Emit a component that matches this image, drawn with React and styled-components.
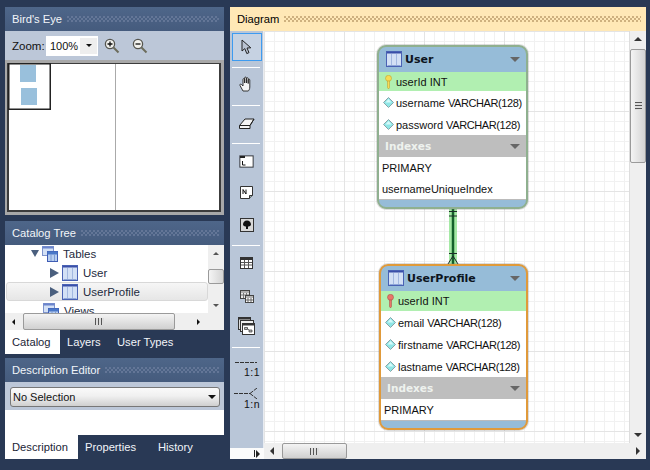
import React from 'react';
import styled, { createGlobalStyle } from 'styled-components';

const GlobalStyle = createGlobalStyle`
  html, body { margin: 0; padding: 0; background: #293955; overflow: hidden; }
  * { box-sizing: border-box; }
  body { font-family: "Liberation Sans", Arial, sans-serif; font-size: 11px; white-space: nowrap; }
`;

const TableIcon = () => (
  <svg width="16" height="16" viewBox="0 0 16 16">
    <rect x="0.5" y="0.5" width="15" height="15" fill="#d3e0f5" stroke="#4a62b4" />
    <rect x="1" y="1" width="14" height="1.500" fill="#3a4fa8" />
    <path d="M5.500 3v11M10.500 3v11" stroke="#a3b8e0" />
    <path d="M1.500 14.500h13" stroke="#8ea6d8" />
  </svg>
);

const TablesIcon = () => (
  <svg width="16" height="16" viewBox="0 0 16 16">
    <rect x="0.5" y="0.5" width="11" height="9" fill="#d3e0f5" stroke="#7d93cc" />
    <rect x="0.5" y="0.5" width="11" height="2" fill="#6b84cc" />
    <rect x="5.500" y="5.500" width="10" height="10" fill="#b8cff0" stroke="#3f5cb4" />
    <rect x="5.500" y="5.500" width="10" height="3" fill="#4a78c8" />
    <path d="M9 8v7M12.500 8v7" stroke="#7f9cd4" />
  </svg>
);

const KeyIcon = ({ color, dark }) => (
  <svg width="7" height="14" viewBox="0 0 7 14">
    <ellipse cx="3.500" cy="3.300" rx="3" ry="3" fill={color} stroke={dark} strokeWidth="0.5" />
    <path d="M2.500 6h2v6.500l-1 1.500-1-1.500z" fill={color} stroke={dark} strokeWidth="0.5" />
  </svg>
);

const DiamondIcon = () => (
  <svg width="11" height="11" viewBox="0 0 11 11">
    <path d="M5.500 0.500l5 5-5 5-5-5z" fill="#8fe6e6" stroke="#8aa4a8" />
    <path d="M5.500 2l3 3.500h-6z" fill="#d6fafa" />
  </svg>
);

const MagnifierIcon = ({ plus }) => (
  <svg width="16" height="16" viewBox="0 0 16 16">
    <circle cx="6" cy="6" r="4.600" fill="#f2f2ee" stroke="#55554f" strokeWidth="1.300" />
    <path d="M9.500 9.500l5 5" stroke="#6c6c5c" strokeWidth="2" />
    <path d={plus ? 'M3.500 6h5M6 3.500v5' : 'M3.500 6h5'} stroke="#111" strokeWidth="1.300" />
  </svg>
);

const CursorIcon = () => (
  <svg width="12" height="16" viewBox="0 0 12 16">
    <path d="M1 1l0 11 2.800-2.400 2 5 2.200-1-2-4.600 3.800-.2z" fill="#b9c3d2" stroke="#222" strokeWidth="1" />
  </svg>
);

const HandIcon = () => (
  <svg width="16" height="16" viewBox="0 0 16 16">
    <path d="M4 15l-3-5.500c-.6-1.200.7-1.800 1.500-1L4 10V3.500c0-1.200 1.500-1.200 1.600 0V7V2c0-1.200 1.700-1.200 1.800 0v5V2.600c0-1.200 1.700-1.200 1.800 0V7.500V4c0-1.200 1.600-1.200 1.600 0v7c0 2-1 4-1.800 4z" fill="#f4f4f4" stroke="#222" strokeWidth="0.900" />
  </svg>
);

const EraserIcon = () => (
  <svg width="16" height="11" viewBox="0 0 16 11">
    <path d="M0.500 7.500L6 1h9l-4 6.500v3H0.500z" fill="#f4f4f4" stroke="#222" />
    <path d="M0.500 7.500h10.500M11 7.500L15 1" stroke="#222" fill="none" />
  </svg>
);

const LayerIcon = () => (
  <svg width="15" height="13" viewBox="0 0 15 13">
    <rect x="0" y="0" width="15" height="13" fill="#8e97a6" />
    <rect x="1" y="1" width="13" height="11" fill="#fff" stroke="#111" strokeWidth="0.600" />
    <path d="M1 1h5v2H1z" fill="#222" />
    <path d="M3.500 6v4h3" stroke="#111" fill="none" />
  </svg>
);

const NoteIcon = () => (
  <svg width="13" height="13" viewBox="0 0 13 13">
    <path d="M0.500 0.500h12v9l-3 3h-9z" fill="#fff" stroke="#333" />
    <path d="M3 8V3.500l3 4.500V3.500" stroke="#111" fill="none" />
    <path d="M9.500 12.500v-3h3" fill="#9aa" stroke="#333" />
  </svg>
);

const ImageIcon = () => (
  <svg width="14" height="14" viewBox="0 0 14 14">
    <rect x="0.500" y="0.500" width="13" height="13" fill="#d8d8d8" stroke="#333" />
    <path d="M7 2.500c2.500 0 4 2 4 4 0 1.500-2 2-3 2v2.500H6V8.500c-1 0-3-.5-3-2 0-2 1.500-4 4-4z" fill="#111" />
  </svg>
);

const GridIcon = () => (
  <svg width="13" height="12" viewBox="0 0 13 12">
    <rect x="0.500" y="0.500" width="12" height="11" fill="#fff" stroke="#333" />
    <path d="M0.500 2h12" stroke="#333" strokeWidth="2" />
    <path d="M1 5.500h11M1 8h11M4.500 3v8M8.500 3v8" stroke="#555" />
  </svg>
);

const ViewIcon = () => (
  <svg width="14" height="13" viewBox="0 0 14 13">
    <rect x="0.500" y="0.500" width="9" height="8" fill="#e8e8e8" stroke="#444" />
    <path d="M1 2h8M3.500 3v5M6.500 3v5M1 5h8" stroke="#777" />
    <rect x="5.500" y="5.500" width="8" height="7" fill="#fff" stroke="#444" />
    <path d="M6 7h7M8 8v4M11 8v4M6 10h7" stroke="#666" />
  </svg>
);

const RoutineIcon = () => (
  <svg width="17" height="18" viewBox="0 0 17 18">
    <rect x="0.500" y="0.500" width="12" height="12" fill="#ddd" stroke="#333" />
    <rect x="0.500" y="0.500" width="12" height="2" fill="#333" />
    <rect x="2.500" y="3.500" width="13" height="11" fill="#eee" stroke="#333" />
    <rect x="4.500" y="6.500" width="12" height="11" fill="#fff" stroke="#333" />
    <rect x="4.500" y="6.500" width="12" height="2" fill="#333" />
    <path d="M6.500 10.500h3v2h-3zM11 13h3v2h-3zM9.500 11.500L11 13" fill="#bbb" stroke="#333" strokeWidth="0.700" />
  </svg>
);

const Connector = () => (
  <Link width="20" height="58" viewBox="0 0 20 58">
    <rect x="7" y="0" width="8" height="56" fill="#8fe48f" opacity="0.8" />
    <path d="M11 0v56" stroke="#14602a" strokeWidth="2.500" />
    <path d="M7 3.500h8M7 8h8M7 45.500h8" stroke="#1c2a28" strokeWidth="1" />
    <path d="M11 48L6 56M11 48L16 56" stroke="#1c2a28" strokeWidth="1" fill="none" />
  </Link>
);

const Page = styled.div`
  width: 650px;
  height: 470px;
  display: flex;
  gap: 6px;
  padding: 7px 4px 11px 5px;
  background: #293955;
  overflow: hidden;
`;

const LeftColumn = styled.div`
  width: 219px;
  display: flex;
  flex-direction: column;
`;

const PaneHeader = styled.div`
  height: 24px;
  flex: none;
  display: flex;
  align-items: center;
  gap: 5px;
  padding: 0 5px 0 7px;
  font-size: 11.200px;
  color: ${({ $light }) => ($light ? '#000' : '#f2f5f9')};
  background: ${({ $light }) => ($light ? '#ffe8b6' : 'linear-gradient(#4e6689, #455b7d)')};
`;

const Dots = styled.div`
  flex: 1;
  height: 6px;
  background-image:
    radial-gradient(circle at 1px 1px, ${({ $light }) => ($light ? '#cdb07e' : '#647798')} 0.700px, transparent 1px),
    radial-gradient(circle at 3px 3px, ${({ $light }) => ($light ? '#cdb07e' : '#647798')} 0.700px, transparent 1px);
  background-size: 4px 4px;
`;

const ZoomBar = styled.div`
  height: 29px;
  flex: none;
  display: flex;
  align-items: center;
  padding: 0 0 0 7px;
  background: #bcc7d8;
`;

const ZoomLabel = styled.span`
  width: 34px;
  font-size: 11.500px;
  color: #111;
`;

const ZoomSelect = styled.div`
  width: 52px;
  height: 20px;
  display: flex;
  align-items: center;
  justify-content: space-between;
  padding-left: 4px;
  background: #fff;
  color: #111;
`;

const ZoomArrow = styled.div`
  width: 17px;
  height: 16px;
  margin-right: 1px;
  display: flex;
  align-items: center;
  justify-content: center;
  background: #eee;
`;

const ZoomButton = styled.div`
  display: flex;
  margin-left: ${({ $left }) => $left}px;
`;

const Caret = styled.div`
  width: 0;
  height: 0;
  flex: none;
  border-style: solid;
  border-color: transparent;
  border-width: ${({ $size = 4 }) => $size}px;
  ${({ $dir = 'down', $color = '#111', $size = 4, $long }) => {
    if ($dir === 'down') return `border-top-color: ${$color}; border-bottom-width: 0; border-top-width: ${$long || $size}px;`;
    if ($dir === 'up') return `border-bottom-color: ${$color}; border-top-width: 0;`;
    if ($dir === 'left') return `border-right-color: ${$color}; border-left-width: 0;`;
    return `border-left-color: ${$color}; border-right-width: 0; border-left-width: ${$long || $size}px;`;
  }}
`;

const BirdWell = styled.div`
  height: 155px;
  flex: none;
  padding: 3px 3px 3px 2px;
  background: #a8a8a8;
`;

const BirdCanvas = styled.div`
  position: relative;
  height: 149px;
  background: #fff;
  border: 2px solid #3c3c3c;
  border-top-width: 1px;
`;

const BirdDivider = styled.div`
  position: absolute;
  left: 106px;
  top: 0;
  bottom: 0;
  width: 1px;
  background: #aaa;
`;

const BirdViewport = styled.div`
  position: absolute;
  left: -1px;
  top: -1px;
  width: 43px;
  height: 47px;
  border: 1px solid #222;
  box-shadow: inset 0 0 0 0.500px #222;
`;

const BirdTable = styled.div`
  position: absolute;
  left: ${({ $x }) => $x}px;
  top: ${({ $y }) => $y}px;
  width: 16px;
  height: 17px;
  background: #99c0dc;
`;

const PaneGap = styled.div`
  height: ${({ $size }) => $size}px;
  flex: none;
`;

const TreeArea = styled.div`
  height: 68px;
  flex: none;
  display: flex;
  background: #fff;
`;

const TreeList = styled.div`
  flex: 1;
  overflow: hidden;
  padding-left: 1px;
`;

const TreeRows = styled.div`
  margin-top: -1px;
`;

const TreeRow = styled.div`
  height: 19px;
  display: flex;
  align-items: center;
  padding-left: ${({ $indent }) => $indent}px;
  font-size: 11.500px;
  color: #1d2a3d;
  border-radius: 3px;
  border: 1px solid ${({ $selected }) => ($selected ? '#d8d8d8' : 'transparent')};
  background: ${({ $selected }) => ($selected ? 'linear-gradient(#f6f6f6, #e6e6e6)' : 'transparent')};
`;

const RowIcon = styled.span`
  display: flex;
  margin: 0 5px 0 3px;
`;

const Scroll = styled.div`
  flex: none;
  display: flex;
  align-items: stretch;
  flex-direction: ${({ $vertical }) => ($vertical ? 'column' : 'row')};
  ${({ $vertical, $thick = 16 }) => ($vertical ? `width: ${$thick}px;` : `height: ${$thick}px;`)}
  background: #efefef;
`;

const ScrollArrow = styled.div`
  flex: none;
  display: flex;
  align-items: center;
  justify-content: center;
  width: 16px;
  height: 16px;
  align-self: center;
`;

const ScrollSpace = styled.div`
  flex: ${({ $size }) => ($size === undefined ? '1' : `0 0 ${$size}px`)};
`;

const ScrollThumb = styled.div`
  flex: 0 0 ${({ $size }) => $size}px;
  display: flex;
  align-items: center;
  justify-content: center;
  border: 1px solid #9a9a9a;
  border-radius: 2px;
  background: ${({ $vertical }) =>
    $vertical ? 'linear-gradient(90deg, #f4f4f4, #d4d4d4)' : 'linear-gradient(#f4f4f4, #d0d0d0)'};
`;

const Grip = styled.div`
  width: ${({ $vertical }) => ($vertical ? '7px' : '9px')};
  height: ${({ $vertical }) => ($vertical ? '8px' : '7px')};
  background: ${({ $vertical }) =>
    $vertical
      ? 'repeating-linear-gradient(#555 0 1px, #ddd 1px 3px)'
      : 'repeating-linear-gradient(90deg, #555 0 1px, #ddd 1px 3px)'};
`;

const TabBar = styled.div`
  height: 24px;
  flex: none;
  display: flex;
`;

const Tab = styled.div`
  width: ${({ $width }) => $width}px;
  display: flex;
  align-items: center;
  padding: 0 0 1px 7px;
  font-size: 11.200px;
  color: ${({ $active }) => ($active ? '#1b2536' : '#f2f5f9')};
  background: ${({ $active }) => ($active ? '#fff' : 'transparent')};
`;

const SelectBar = styled.div`
  height: 28px;
  flex: none;
  padding: 5px 4px 4px 5px;
  background: #bcc7d8;
`;

const SelectBox = styled.div`
  height: 20px;
  display: flex;
  align-items: center;
  justify-content: space-between;
  padding: 0 3px 0 2px;
  color: #111;
  border: 1px solid #777;
  border-radius: 3px;
  background: linear-gradient(#fafafa 0%, #f0f0f0 45%, #cfcfcf 100%);
`;

const DescriptionBody = styled.div`
  height: 25px;
  flex: none;
  background: #fff;
`;

const RightColumn = styled.div`
  flex: 1;
  display: flex;
  flex-direction: column;
`;

const DiagramBody = styled.div`
  flex: 1;
  display: flex;
  min-height: 0;
`;

const Palette = styled.div`
  width: 34px;
  flex: none;
  display: flex;
  flex-direction: column;
  align-items: center;
  padding: 2px 1px 0 0;
  background: #b9c6d8;
  border-right: 1px solid #e8ecf2;
`;

const Tool = styled.div`
  width: 30px;
  height: 28px;
  flex: none;
  margin-top: ${({ $top = 0 }) => $top}px;
  margin-left: 1px;
  display: flex;
  align-items: center;
  justify-content: center;
  border: 1px solid ${({ $selected }) => ($selected ? '#3d9bf0' : 'transparent')};
  background: ${({ $selected }) => ($selected ? '#c6d2e2' : 'transparent')};
`;

const ToolSeparator = styled.div`
  width: 28px;
  height: 1px;
  flex: none;
  margin-top: ${({ $top }) => $top}px;
  background: #fff;
`;

const RelationTool = styled.div`
  width: 28px;
  flex: none;
  margin-top: ${({ $top }) => $top}px;
  display: flex;
  flex-direction: column;
  align-items: flex-end;
  gap: ${({ $gap }) => $gap}px;
  font-size: 10.500px;
  letter-spacing: 0.500px;
  line-height: 10px;
  color: #111;
`;

const RelationLine = styled.svg`
  margin-right: ${({ $right }) => $right}px;
`;

const PaletteFooter = styled.div`
  margin: auto -1px 0 0;
  width: 34px;
  height: 11px;
  flex: none;
  display: flex;
  align-items: center;
  justify-content: flex-end;
  gap: 1px;
  padding-right: 4px;
  background: #fbfbfb;
`;

const FooterBar = styled.div`
  width: 1px;
  height: 7px;
  background: #222;
`;

const CanvasColumn = styled.div`
  flex: 1;
  min-width: 0;
  display: flex;
  flex-direction: column;
`;

const CanvasRow = styled.div`
  flex: 1;
  min-height: 0;
  display: flex;
`;

const Canvas = styled.div`
  position: relative;
  flex: 1;
  overflow: hidden;
  background-color: #fff;
  background-image:
    linear-gradient(90deg, #e4e4e4 1px, transparent 1px),
    linear-gradient(#e4e4e4 1px, transparent 1px),
    linear-gradient(90deg, #f1f1f1 1px, transparent 1px),
    linear-gradient(#f1f1f1 1px, transparent 1px);
  background-size: 80px 80px, 80px 80px, 10px 10px, 10px 10px;
  border-right: 1px solid #ddd;
`;

const Link = styled.svg`
  position: absolute;
  left: 178px;
  top: 177px;
`;

const EntityCard = styled.div`
  position: absolute;
  left: ${({ $x }) => $x}px;
  top: ${({ $y }) => $y}px;
  width: ${({ $w }) => $w}px;
  display: flex;
  flex-direction: column;
  padding-bottom: 7px;
  border: 2px solid ${({ $border }) => $border};
  border-radius: 9px;
  background: #96bcd8;
  box-shadow: 0 0 0 1px rgba(120, 120, 120, 0.250);
  overflow: hidden;
`;

const EntityTitle = styled.div`
  height: 25px;
  flex: none;
  display: flex;
  align-items: center;
  padding: 0 6px 1px 7px;
  gap: 3px;
  font-family: "DejaVu Sans", sans-serif;
  font-size: 11px;
  font-weight: 700;
  color: #0c1420;
`;

const TitleText = styled.span`
  flex: 1;
`;

const ColumnRow = styled.div`
  height: ${({ $h = 22 }) => $h}px;
  flex: none;
  display: flex;
  align-items: center;
  gap: 2px;
  padding: ${({ $primary }) => ($primary ? '0' : '1px')} 0 0 4px;
  color: #111;
  background: ${({ $primary }) => ($primary ? '#b1efb1' : '#fff')};
`;

const ColumnIcon = styled.span`
  width: 11px;
  flex: none;
  display: flex;
  justify-content: center;
`;

const ColumnType = styled.span`
  margin-left: 3px;
  letter-spacing: -0.400px;
`;

const IndexHeader = styled.div`
  height: 22px;
  flex: none;
  display: flex;
  align-items: center;
  justify-content: space-between;
  padding: 0 6px;
  font-family: "DejaVu Sans", sans-serif;
  font-size: 10.500px;
  font-weight: 700;
  color: #eef2ee;
  background: #bebebe;
`;

const IndexList = styled.div`
  display: flex;
  flex-direction: column;
  background: #fff;
  border-bottom: 1px solid #bbb;
`;

const IndexRow = styled.div`
  height: 21px;
  display: flex;
  align-items: center;
  padding: 1px 0 0 3px;
  color: #111;
`;

const columnsUser = [
  ['username', 'VARCHAR(128)'],
  ['password', 'VARCHAR(128)'],
];

const columnsProfile = [
  ['email', 'VARCHAR(128)'],
  ['firstname', 'VARCHAR(128)'],
  ['lastname', 'VARCHAR(128)'],
];

const Entity = ({ name, x, y, w, border, keyColor, keyDark, columns, indexes, primaryHeight }) => (
  <EntityCard $x={x} $y={y} $w={w} $border={border}>
    <EntityTitle>
      <TableIcon />
      <TitleText>{name}</TitleText>
      <Caret $size={5} $color="#666" />
    </EntityTitle>
    <ColumnRow $primary $h={primaryHeight}>
      <ColumnIcon><KeyIcon color={keyColor} dark={keyDark} /></ColumnIcon>
      userId INT
    </ColumnRow>
    {columns.map(([col, type]) => (
      <ColumnRow key={col}>
        <ColumnIcon><DiamondIcon /></ColumnIcon>
        <span>{col}<ColumnType>{type}</ColumnType></span>
      </ColumnRow>
    ))}
    <IndexHeader>
      Indexes
      <Caret $size={5} $color="#666" />
    </IndexHeader>
    <IndexList>
      {indexes.map((ix) => <IndexRow key={ix}>{ix}</IndexRow>)}
    </IndexList>
  </EntityCard>
);

const App = () => (
  <Page>
    <GlobalStyle />
    <LeftColumn>
      <PaneHeader>Bird's Eye<Dots /></PaneHeader>
      <ZoomBar>
        <ZoomLabel>Zoom:</ZoomLabel>
        <ZoomSelect>
          100%
          <ZoomArrow><Caret $size={3} /></ZoomArrow>
        </ZoomSelect>
        <ZoomButton $left={6}><MagnifierIcon plus /></ZoomButton>
        <ZoomButton $left={12}><MagnifierIcon /></ZoomButton>
      </ZoomBar>
      <BirdWell>
        <BirdCanvas>
          <BirdDivider />
          <BirdTable $x={11} $y={1} />
          <BirdTable $x={12} $y={24} />
          <BirdViewport />
        </BirdCanvas>
      </BirdWell>
      <PaneGap $size={6} />
      <PaneHeader>Catalog Tree<Dots /></PaneHeader>
      <TreeArea>
        <TreeList>
          <TreeRows>
            <TreeRow $indent={24}>
              <Caret $size={4.500} $long={7} $color="#4a5f7e" />
              <RowIcon><TablesIcon /></RowIcon>
              Tables
            </TreeRow>
            <TreeRow $indent={43}>
              <Caret $dir="right" $size={5} $long={9} $color="#4a5f7e" />
              <RowIcon><TableIcon /></RowIcon>
              User
            </TreeRow>
            <TreeRow $indent={43} $selected>
              <Caret $dir="right" $size={5} $long={9} $color="#4a5f7e" />
              <RowIcon><TableIcon /></RowIcon>
              UserProfile
            </TreeRow>
            <TreeRow $indent={33}>
              <RowIcon><TablesIcon /></RowIcon>
              Views
            </TreeRow>
          </TreeRows>
        </TreeList>
        <Scroll $vertical>
          <ScrollArrow><Caret $dir="up" $size={3} $color="#555" /></ScrollArrow>
          <ScrollSpace $size={8} />
          <ScrollThumb $vertical $size={15} />
          <ScrollSpace />
          <ScrollArrow><Caret $size={3} $color="#555" /></ScrollArrow>
        </Scroll>
      </TreeArea>
      <Scroll $thick={17}>
        <ScrollArrow><Caret $dir="left" $size={3} /></ScrollArrow>
        <ScrollSpace $size={2} />
        <ScrollThumb $size={152}><Grip /></ScrollThumb>
        <ScrollSpace />
        <ScrollArrow><Caret $dir="right" $size={3} /></ScrollArrow>
        <ScrollSpace $size={18} />
      </Scroll>
      <TabBar>
        <Tab $active $width={55}>Catalog</Tab>
        <Tab $width={50}>Layers</Tab>
        <Tab $width={100}>User Types</Tab>
      </TabBar>
      <PaneGap $size={4} />
      <PaneHeader>Description Editor<Dots /></PaneHeader>
      <SelectBar>
        <SelectBox>
          No Selection
          <Caret $size={4} />
        </SelectBox>
      </SelectBar>
      <DescriptionBody />
      <TabBar>
        <Tab $active $width={73}>Description</Tab>
        <Tab $width={73}>Properties</Tab>
        <Tab $width={60}>History</Tab>
      </TabBar>
    </LeftColumn>
    <RightColumn>
      <PaneHeader $light>Diagram<Dots $light /></PaneHeader>
      <DiagramBody>
        <Palette>
          <Tool $selected><CursorIcon /></Tool>
          <ToolSeparator $top={6} />
          <Tool $top={2}><HandIcon /></Tool>
          <ToolSeparator $top={7} />
          <Tool $top={3}><EraserIcon /></Tool>
          <ToolSeparator $top={6} />
          <Tool $top={3}><LayerIcon /></Tool>
          <Tool $top={3}><NoteIcon /></Tool>
          <Tool $top={5}><ImageIcon /></Tool>
          <ToolSeparator $top={6} />
          <Tool $top={3}><GridIcon /></Tool>
          <Tool $top={5}><ViewIcon /></Tool>
          <Tool $top={2}><RoutineIcon /></Tool>
          <ToolSeparator $top={7} />
          <RelationTool $top={13} $gap={3}>
            <RelationLine $right={3} width="22" height="3" viewBox="0 0 22 3"><path d="M0 1.500h22" stroke="#333" strokeDasharray="4 1" /></RelationLine>
            1:1
          </RelationTool>
          <RelationTool $top={11} $gap={0}>
            <RelationLine $right={2} width="24" height="11" viewBox="0 0 24 11"><path d="M0 5.500h16M16 5.500L23 0M16 5.500l7 5.500" stroke="#333" strokeDasharray="4 1" fill="none" /></RelationLine>
            1:n
          </RelationTool>
          <PaletteFooter>
            <FooterBar />
            <Caret $dir="right" $size={4} $color="#222" />
          </PaletteFooter>
        </Palette>
        <CanvasColumn>
          <CanvasRow>
            <Canvas>
              <Connector />
              <Entity
                name="User"
                x={113}
                y={14}
                w={151}
                border="#8fb08f"
                keyColor="#f7dc55"
                keyDark="#b8962a"
                columns={columnsUser}
                indexes={['PRIMARY', 'usernameUniqueIndex']}
                primaryHeight={19}
              />
              <Entity
                name="UserProfile"
                x={115}
                y={233}
                w={149}
                border="#e09a3a"
                keyColor="#e8766a"
                keyDark="#a04a40"
                columns={columnsProfile}
                indexes={['PRIMARY']}
                primaryHeight={20}
              />
            </Canvas>
            <Scroll $vertical>
              <ScrollArrow><Caret $dir="up" $size={4} $color="#333" /></ScrollArrow>
              <ScrollSpace $size={2} />
              <ScrollThumb $vertical $size={114}><Grip $vertical /></ScrollThumb>
              <ScrollSpace />
              <ScrollArrow><Caret $size={4} $color="#333" /></ScrollArrow>
            </Scroll>
          </CanvasRow>
          <Scroll>
            <ScrollArrow><Caret $dir="left" $size={4} $color="#333" /></ScrollArrow>
            <ScrollSpace $size={2} />
            <ScrollThumb $size={65}><Grip /></ScrollThumb>
            <ScrollSpace />
            <ScrollArrow><Caret $dir="right" $size={4} $color="#333" /></ScrollArrow>
          </Scroll>
        </CanvasColumn>
      </DiagramBody>
    </RightColumn>
  </Page>
);

export default App;
